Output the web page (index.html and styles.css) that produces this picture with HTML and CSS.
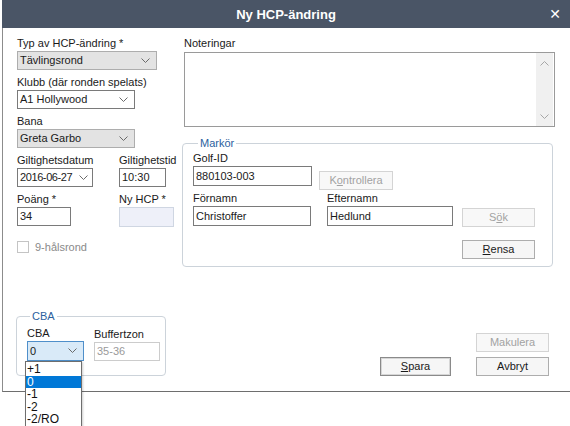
FILE: index.html
```html
<!DOCTYPE html>
<html lang="sv">
<head>
    <meta charset="UTF-8">
    <title>Ny HCP-ändring</title>
    <link rel="stylesheet" href="styles.css">
</head>
<body>
    <div class="dialog">
        <div class="titlebar">
            <div class="title">Ny HCP-ändring</div>
            <div class="close">&#x2715;</div>
        </div>
        <div class="content">
            <div class="top">
                <div class="left">
                    <div class="field">
                        <div class="label">Typ av HCP-ändring *</div>
                        <div class="combo gray w140">Tävlingsrond<svg class="chev" width="9" height="5"><polyline points="0.5,0.5 4.5,4.5 8.5,0.5"/></svg></div>
                    </div>
                    <div class="field">
                        <div class="label">Klubb (där ronden spelats)</div>
                        <div class="combo w118">A1 Hollywood<svg class="chev" width="9" height="5"><polyline points="0.5,0.5 4.5,4.5 8.5,0.5"/></svg></div>
                    </div>
                    <div class="field">
                        <div class="label">Bana</div>
                        <div class="combo gray w118">Greta Garbo<svg class="chev" width="9" height="5"><polyline points="0.5,0.5 4.5,4.5 8.5,0.5"/></svg></div>
                    </div>
                    <div class="pair">
                        <div class="field col1">
                            <div class="label">Giltighetsdatum</div>
                            <div class="combo date w76">2016-06-27<svg class="chev" width="9" height="5"><polyline points="0.5,0.5 4.5,4.5 8.5,0.5"/></svg></div>
                        </div>
                        <div class="field">
                            <div class="label">Giltighetstid</div>
                            <div class="input w47">10:30</div>
                        </div>
                    </div>
                    <div class="pair">
                        <div class="field col1">
                            <div class="label">Poäng *</div>
                            <div class="input w54">34</div>
                        </div>
                        <div class="field">
                            <div class="label">Ny HCP *</div>
                            <div class="input readonly w55"></div>
                        </div>
                    </div>
                    <div class="check">
                        <span class="box"></span>
                        <span>9-hålsrond</span>
                    </div>
                </div>
                <div class="right">
                    <div class="label notes-label">Noteringar</div>
                    <div class="notes">
                        <div class="scrollbar">
                            <svg width="9" height="5"><polyline points="0.5,4.5 4.5,0.5 8.5,4.5"/></svg>
                            <svg width="9" height="5"><polyline points="0.5,0.5 4.5,4.5 8.5,0.5"/></svg>
                        </div>
                    </div>
                    <fieldset class="group marker">
                        <legend>Markör</legend>
                        <div class="marker-row">
                            <div class="field">
                                <div class="label">Golf-ID</div>
                                <div class="input tall w119">880103-003</div>
                            </div>
                            <div class="btn disabled check-btn">K<u>o</u>ntrollera</div>
                        </div>
                        <div class="marker-row row2">
                            <div class="field">
                                <div class="label">Förnamn</div>
                                <div class="input tall w118">Christoffer</div>
                            </div>
                            <div class="field last-name">
                                <div class="label">Efternamn</div>
                                <div class="input tall w126">Hedlund</div>
                            </div>
                            <div class="btn disabled search-btn">S<u>ö</u>k</div>
                        </div>
                        <div class="marker-row row3">
                            <div class="btn"><u>R</u>ensa</div>
                        </div>
                    </fieldset>
                </div>
            </div>
            <div class="bottom">
                <fieldset class="group cba">
                    <legend>CBA</legend>
                    <div class="cba-row">
                        <div class="field cba-field">
                            <div class="label">CBA</div>
                            <div class="combo focused w57">0<svg class="chev" width="9" height="5"><polyline points="0.5,0.5 4.5,4.5 8.5,0.5"/></svg></div>
                        </div>
                        <div class="field buffer">
                            <div class="label">Buffertzon</div>
                            <div class="input disabled-input w66">35-36</div>
                        </div>
                    </div>
                </fieldset>
                <div class="actions">
                    <div></div>
                    <div class="btn disabled">Makulera</div>
                    <div class="btn default"><u>S</u>para</div>
                    <div class="btn">Avbryt</div>
                </div>
            </div>
        </div>
        <ul class="dropdown">
            <li>+1</li>
            <li class="selected">0</li>
            <li>-1</li>
            <li>-2</li>
            <li>-2/RO</li>
        </ul>
    </div>
</body>
</html>
```

FILE: styles.css
```css
* {
    box-sizing: border-box;
}

html,
body {
    min-height: 426px;
}

body {
    margin: 0;
    background-color: #fff;
    font-family: "Liberation Sans", Arial, sans-serif;
    font-size: 11px;
    color: #1a1a1a;
}

.dialog {
    margin-left: 2px;
    width: 568px;
    border-left: 1px solid #8c8c8c;
    border-bottom: 1px solid #6e6e6e;
    background-color: #fff;
    position: relative;
}

.titlebar {
    height: 28px;
    margin-left: -1px;
    background-color: #4a5566;
    color: #fff;
    display: flex;
    align-items: center;
    justify-content: center;
    position: relative;
}

.title {
    font-size: 13px;
    font-weight: bold;
}

.close {
    position: absolute;
    right: 9px;
    top: 6px;
    font-family: "DejaVu Sans", sans-serif;
    font-size: 14px;
    font-weight: bold;
}

.content {
    padding: 8px 15px 15px 14px;
}

.top {
    display: flex;
}

.left {
    width: 165px;
}

.right {
    flex: 1;
}

.label {
    height: 15px;
    line-height: 15px;
    white-space: nowrap;
}

.field {
    margin-bottom: 5px;
}

.pair {
    display: flex;
}

.col1 {
    width: 102px;
}

/* combo boxes and text boxes */
.combo,
.input {
    height: 19px;
    line-height: 17px;
    border: 1px solid #7a7a7a;
    background-color: #fff;
    padding-left: 2px;
    position: relative;
    white-space: nowrap;
}

.combo.date {
    letter-spacing: -0.4px;
}

.combo.date .chev {
    right: 4px;
}

.input.tall {
    height: 20px;
    line-height: 18px;
}

.combo.gray {
    background-color: #e3e3e3;
    border-color: #adadad;
}

.combo.focused {
    background-color: #d9eaf8;
    border-color: #4f8fca;
    height: 20px;
    line-height: 18px;
}

.chev {
    position: absolute;
    right: 6px;
    top: 6px;
    fill: none;
    stroke: #6a6a6a;
    stroke-width: 1;
}

.input.readonly {
    background-color: #eef0f9;
    border-color: #cfd6e2;
    height: 20px;
}

.input.disabled-input {
    border-color: #cccccc;
    color: #9a9a9a;
}

.w140 { width: 140px; }
.w118 { width: 118px; }
.w119 { width: 119px; }
.w126 { width: 126px; }
.w76 { width: 76px; }
.w47 { width: 47px; }
.w54 { width: 54px; }
.w55 { width: 55px; }
.w57 { width: 57px; }
.w66 { width: 66px; }

.check {
    display: flex;
    align-items: center;
    margin-top: 9px;
    color: #8a8a8a;
}

.check .box {
    width: 12px;
    height: 12px;
    border: 1px solid #c4c4c4;
    margin-right: 6px;
}

/* notes */
.notes-label {
    padding-left: 2px;
}

.notes {
    margin: 1px 0 0 2px;
    width: 371px;
    height: 75px;
    border: 1px solid #9a9a9a;
    display: flex;
    justify-content: flex-end;
    padding: 0 1px 0 0;
}

.scrollbar {
    width: 17px;
    background-color: #f0f0f0;
    display: flex;
    flex-direction: column;
    justify-content: space-between;
    align-items: center;
    padding: 8px 0 7px;
}

.scrollbar svg {
    fill: none;
    stroke: #a6a6a6;
}

/* group boxes */
.group {
    margin: 9px 0 0;
    padding: 0;
    border: 1px solid #ccd3da;
    border-radius: 4px;
    min-width: 0;
}

.group legend {
    margin-left: 5px;
    padding: 0 2px;
    line-height: 14px;
    color: #2c5f9e;
}

.marker {
    width: 371px;
    padding: 1px 0 7px 10px;
}

.marker-row {
    display: flex;
    align-items: flex-start;
}

.marker-row .field {
    margin-bottom: 0;
}

.row2 {
    margin-top: 1px;
}

.last-name {
    margin-left: 16px;
}

.row3 {
    justify-content: flex-end;
    margin-top: 13px;
    padding-right: 17px;
}

/* buttons */
.btn {
    width: 73px;
    height: 19px;
    line-height: 17px;
    text-align: center;
    border: 1px solid #adadad;
    background-color: #f6f6f6;
    color: #1a1a1a;
}

.btn.disabled {
    border-color: #d4d4d4;
    color: #a2a2a2;
    background-color: #f8f8f8;
}

.btn.default {
    width: 71px;
    border-color: #8a8a8a;
    box-shadow: inset 0 0 0 1px #d6d6d6;
}

.check-btn {
    margin: 20px 0 0 7px;
    width: 74px;
}

.search-btn {
    margin: 17px 0 0 9px;
}

/* bottom part */
.bottom {
    display: flex;
    align-items: flex-end;
    margin-top: 42px;
}

.cba {
    margin: 0 0 0 -1px;
    width: 150px;
    padding: 3px 0 14px 8px;
}

.cba-row {
    display: flex;
    align-items: flex-end;
}

.cba-row .field {
    margin-bottom: 0;
}

.cba-field {
    padding-left: 2px;
}

.buffer {
    margin-left: 10px;
}

/* open list of the CBA combo, drawn over the dialog edge */
.dropdown {
    position: absolute;
    left: 22px;
    top: 361px;
    width: 57px;
    margin: 0;
    padding: 1px 0 0;
    list-style: none;
    background-color: #fff;
    border: 1px solid #6e6e6e;
    box-shadow: 1px 1px 2px rgba(0, 0, 0, 0.2);
}

.dropdown li {
    height: 12.5px;
    line-height: 12.5px;
    padding-left: 1px;
    font-size: 12px;
    color: #111;
}

.dropdown li.selected {
    background-color: #0078d7;
    color: #fff;
}

.actions {
    margin-left: auto;
    margin-right: 6px;
    display: grid;
    grid-template-columns: 71px 73px;
    column-gap: 25px;
    row-gap: 5px;
}
```
